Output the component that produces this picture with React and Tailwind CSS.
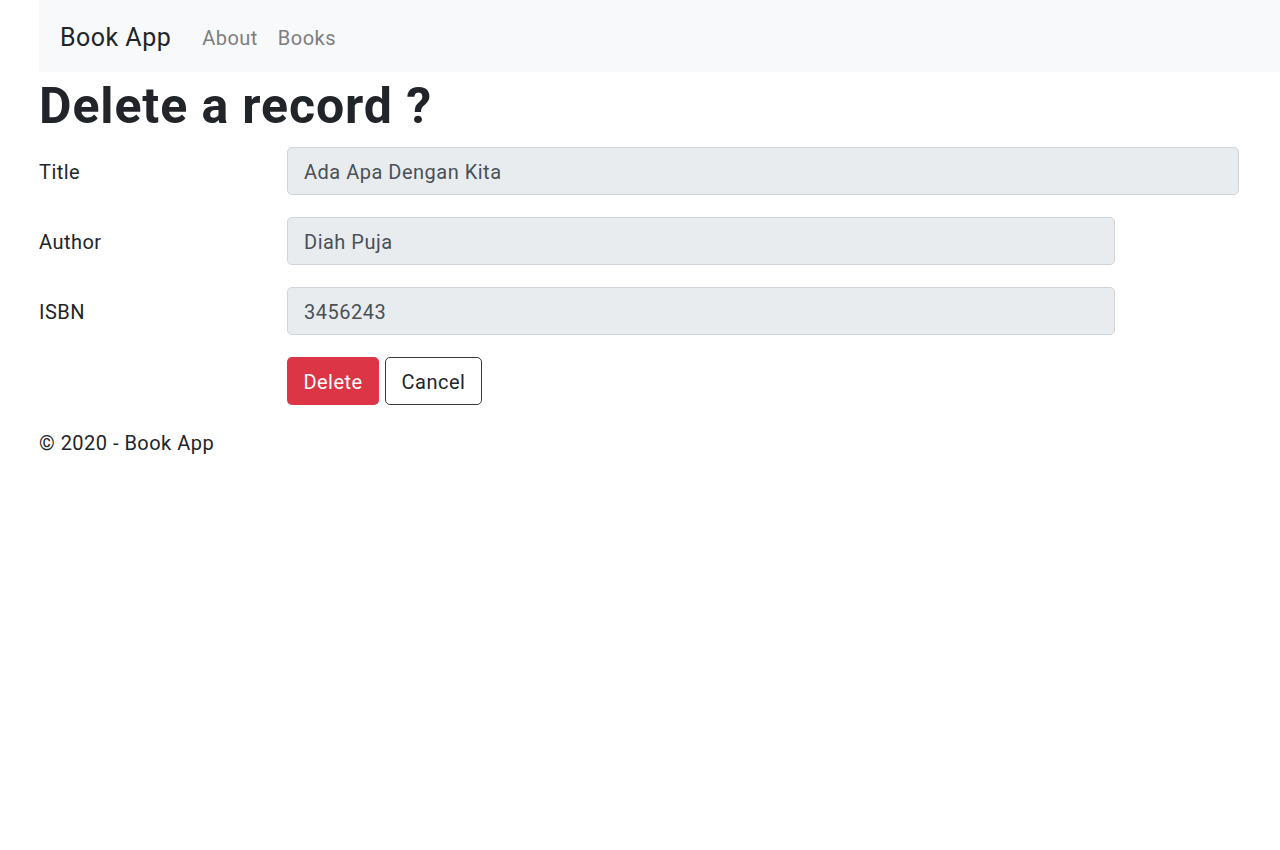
import React from 'react'

const Field = ({ label, value, wide }) => (
  <div className="flex items-center mb-[22px]">
    <label className="w-[248px] text-[20px] text-[#212529] leading-[30px] pt-[1px]">{label}</label>
    <input
      readOnly
      value={value}
      className={`${wide ? 'w-[952px]' : 'w-[828px]'} h-[48px] px-[16px] pt-[2px] text-[20px] tracking-[0.025em] text-[#495057] bg-[#e9ecef] border border-[#ced4da] rounded-[5px] outline-none`}
    />
  </div>
)

const App = () => {
  return (
    <div className="min-h-[850px] bg-white font-['Roboto',sans-serif] text-[#212529] tracking-[0.03em]">
      <nav className="ml-[39px] h-[72px] bg-[#f8f9fa] flex items-center pl-[21px] pt-[3px]">
        <span className="text-[25px] leading-none text-[#212529] mr-[21px]">Book App</span>
        <a href="#about" className="px-[10px] text-[20px] text-[#7d7e7f]">About</a>
        <a href="#books" className="px-[10px] text-[20px] text-[#7d7e7f]">Books</a>
      </nav>
      <main className="pl-[39px]">
        <h1 className="mt-[4px] mb-[11px] text-[50px] leading-[60px] font-bold tracking-[0.018em]">Delete a record ?</h1>
        <form>
          <Field label="Title" value="Ada Apa Dengan Kita" wide />
          <Field label="Author" value="Diah Puja" />
          <Field label="ISBN" value="3456243" />
          <div className="flex gap-[6px] ml-[248px] mt-[1px]">
            <button type="button" className="w-[92px] h-[48px] pt-[2px] text-[20px] text-white bg-[#dc3545] rounded-[5px]">Delete</button>
            <button type="button" className="w-[97px] h-[48px] pt-[2px] text-[20px] text-[#212529] bg-white border border-[#343a40] rounded-[5px]">Cancel</button>
          </div>
        </form>
        <footer className="mt-[23px] text-[20px] leading-[30px]">© 2020 - Book App</footer>
      </main>
    </div>
  )
}

export default App
